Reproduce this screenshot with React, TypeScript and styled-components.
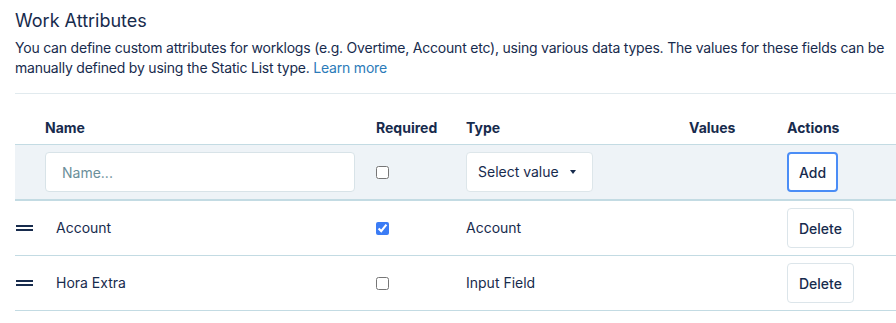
import React from 'react';
import styled, { createGlobalStyle } from 'styled-components';

const GlobalStyle = createGlobalStyle`
  body {
    margin: 0;
    background: #ffffff;
    font-family: Inter, "Noto Sans", sans-serif;
    color: #172b4d;
  }
`;

const rows = [
  { name: 'Account', required: true, type: 'Account' },
  { name: 'Hora Extra', required: false, type: 'Input Field' },
];

const App = () => {
  return (
    <>
      <GlobalStyle />
      <Page>
        <Title>Work Attributes</Title>
        <Description>
          You can define custom attributes for worklogs (e.g. Overtime, Account etc), using various
          data types. The values for these fields can be manually defined by using the Static List
          type. <Link href="#">Learn more</Link>
        </Description>
        <Divider />
        <HeaderRow>
          <span />
          <HeadCell>Name</HeadCell>
          <HeadCell>Required</HeadCell>
          <HeadCell>Type</HeadCell>
          <HeadCell>Values</HeadCell>
          <HeadCell>Actions</HeadCell>
        </HeaderRow>
        <NewRow>
          <span />
          <NameInput placeholder="Name..." />
          <Cell>
            <Checkbox type="checkbox" />
          </Cell>
          <Cell>
            <SelectBox>
              Select value
              <Caret />
            </SelectBox>
          </Cell>
          <span />
          <Cell>
            <Button primary>Add</Button>
          </Cell>
        </NewRow>
        {rows.map((row) => (
          <Row key={row.name}>
            <Cell>
              <Handle width="17" height="8" viewBox="0 0 17 8">
                <rect x="0" y="1" width="17" height="2" fill="#172b4d" />
                <rect x="0" y="5" width="17" height="2" fill="#172b4d" />
              </Handle>
            </Cell>
            <NameCell>{row.name}</NameCell>
            <Cell>
              <Checkbox type="checkbox" defaultChecked={row.required} />
            </Cell>
            <Cell>{row.type}</Cell>
            <span />
            <Cell>
              <Button>Delete</Button>
            </Cell>
          </Row>
        ))}
      </Page>
    </>
  );
};

const Page = styled.div`
  padding: 9px 0 0 15px;
`;

const Title = styled.h1`
  margin: 0;
  font-size: 18px;
  line-height: 24px;
  font-weight: 400;
  color: #172b4d;
`;

const Description = styled.p`
  margin: 5px 0 0;
  font-size: 14px;
  line-height: 20px;
  letter-spacing: -0.21px;
  color: #172b4d;
`;

const Link = styled.a`
  color: #2b7bb9;
  text-decoration: none;
`;

const Divider = styled.div`
  margin-top: 15px;
  height: 1px;
  background: #e1eaee;
`;

const columns = '30px 331px 90px 223px 98px 1fr';

const HeaderRow = styled.div`
  display: grid;
  grid-template-columns: ${columns};
  align-items: end;
  height: 51px;
  padding-bottom: 6px;
  box-sizing: border-box;
  border-bottom: 1px solid #c3dbe3;
`;

const HeadCell = styled.div`
  font-size: 14px;
  line-height: 20px;
  font-weight: 700;
`;

const NewRow = styled.div`
  display: grid;
  grid-template-columns: ${columns};
  align-items: center;
  height: 56px;
  box-sizing: border-box;
  background: #eef3f7;
  border-bottom: 2px solid #c3dbe3;
`;

const Row = styled.div`
  display: grid;
  grid-template-columns: ${columns};
  align-items: center;
  height: 55px;
  box-sizing: border-box;
  border-bottom: 1px solid #c3dbe3;
`;

const Cell = styled.div`
  display: flex;
  align-items: center;
  font-size: 14px;
  line-height: 20px;
`;

const NameCell = styled(Cell)`
  padding-left: 11px;
`;

const NameInput = styled.input`
  width: 310px;
  height: 40px;
  box-sizing: border-box;
  padding: 0 16px;
  border: 1px solid #d8e3e8;
  border-radius: 4px;
  background: #ffffff;
  font-family: Inter, "Noto Sans", sans-serif;
  font-size: 14px;
  color: #172b4d;
  outline: none;

  &::placeholder {
    color: #6b8f9a;
  }
`;

const Checkbox = styled.input`
  margin: 0;
  width: 13px;
  height: 13px;
  accent-color: #3b7cf5;
`;

const SelectBox = styled.div`
  width: 127px;
  height: 40px;
  box-sizing: border-box;
  padding: 0 11px;
  display: flex;
  align-items: center;
  justify-content: space-between;
  border: 1px solid #dde6ea;
  border-radius: 4px;
  background: #ffffff;
  font-size: 14px;
  color: #172b4d;
`;

const Caret = styled.span`
  width: 0;
  height: 0;
  margin-right: 5px;
  border-left: 3px solid transparent;
  border-right: 3px solid transparent;
  border-top: 4px solid #172b4d;
`;

const Button = styled.button<{ primary?: boolean }>`
  height: 40px;
  box-sizing: border-box;
  padding: 0 ${(p) => (p.primary ? '10px' : '11px')};
  border: ${(p) => (p.primary ? '2px solid #4b8df6' : '1px solid #dce5ea')};
  border-radius: 4px;
  background: #ffffff;
  font-family: Inter, "Noto Sans", sans-serif;
  font-size: 14px;
  font-weight: 500;
  color: #172b4d;
  cursor: pointer;
`;

const Handle = styled.svg`
  margin-left: 1px;
  display: block;
`;

export default App;
